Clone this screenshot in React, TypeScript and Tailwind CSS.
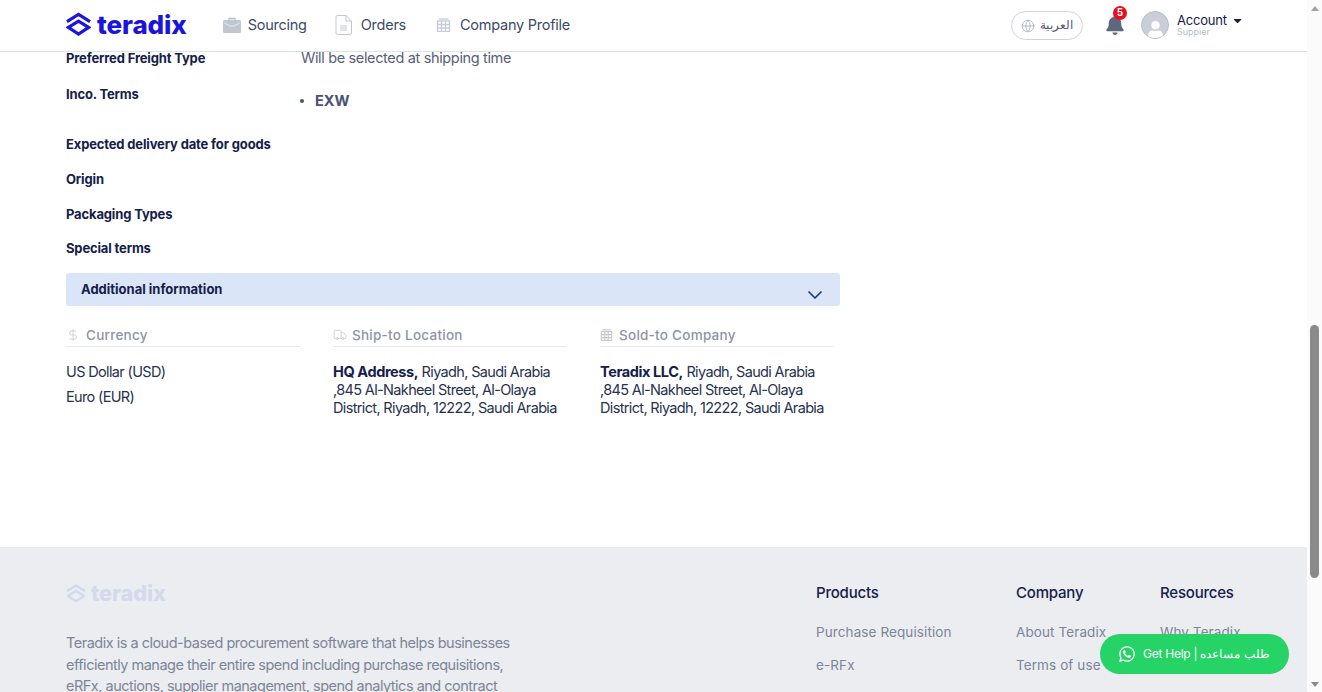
import { ChevronDown, DollarSign, Globe, Truck } from 'lucide-react';
import { FaBell, FaCaretDown, FaUser, FaWhatsapp } from 'react-icons/fa';

function Logo({ faded = false }: { faded?: boolean }) {
    const color = faded ? 'text-[#d5d9ee]' : 'text-[#1a14dc]';
    return (
        <div className={`flex items-center ${faded ? 'gap-[5px]' : 'gap-[6px]'} ${color}`}>
            <svg viewBox="0 0 26 26" className={faded ? 'h-[20px] w-[20px]' : 'h-[26px] w-[25px]'} fill="none" stroke="currentColor" strokeWidth="3.2">
                <path d="M1 9.5 13 2l12 7.5" />
                <path d="M2.5 15.5 13 9l10.5 6.5L13 22.5z" />
            </svg>
            <span className={`font-extrabold leading-none ${faded ? 'text-[21.5px]' : 'text-[26px] tracking-[-0.1px]'}`}>teradix</span>
        </div>
    );
}

function BriefcaseIcon() {
    return (
        <svg viewBox="0 0 18 16" className="h-[16px] w-[18px]" fill="none">
            <path d="M6 3V1.5h6V3" stroke="#b9c0cc" strokeWidth="1.3" />
            <rect y="3" width="18" height="13" rx="1.5" fill="#c1c7d2" />
            <path d="M0.5 5.5 7 9h4l6.5-3.5" stroke="#e4e7ec" strokeWidth="1" />
        </svg>
    );
}

function DocIcon() {
    return (
        <svg viewBox="0 0 17 20" className="h-[20px] w-[17px]" fill="none" stroke="#c1c7d2" strokeWidth="1">
            <path d="M1 2a1.5 1.5 0 0 1 1.5-1.5H11L16.500 6v12a1.500 1.500 0 0 1-1.500 1.500H2.500A1.500 1.500 0 0 1 1 18z" />
            <path d="M11 .5V6h5.500M5 11h7M5 13h7M5 15h7" />
        </svg>
    );
}

function GridBuildingIcon({ className }: { className: string }) {
    return (
        <svg viewBox="0 0 15 14" className={className} fill="none" stroke="currentColor" strokeWidth="1.3">
            <path d="M2.500 1h10" />
            <rect x="1.500" y="3" width="12" height="10.500" />
            <path d="M5.500 3v10.500M9.500 3v10.500M1.500 6.500h12M1.500 10h12" />
        </svg>
    );
}

function Header() {
    return (
        <header className="flex h-[52px] shrink-0 items-center justify-between border-b border-[#dfe1e6] bg-white pb-[2px] pl-[66px] pr-[65px]">
            <div className="flex items-center">
                <Logo />
                <nav className="ml-[36px] flex items-center text-[14.5px] tracking-[-0.25px] text-[#3d4a68]">
                    <div className="flex items-center gap-[7px]">
                        <BriefcaseIcon />
                        <span>Sourcing</span>
                    </div>
                    <div className="ml-[28px] flex items-center gap-[9px]">
                        <DocIcon />
                        <span>Orders</span>
                    </div>
                    <div className="ml-[30px] flex items-center gap-[9px]">
                        <GridBuildingIcon className="h-[14px] w-[15px] text-[#c6cbd5]" />
                        <span>Company Profile</span>
                    </div>
                </nav>
            </div>
            <div className="flex items-center">
                <div className="mt-[2px] flex h-[29px] w-[72px] items-center justify-center gap-[5px] rounded-full border border-[#cfd3da] text-[11.5px] text-[#4f5b76]">
                    <Globe className="h-[14px] w-[14px] text-[#a9b0bf]" strokeWidth={1.4} />
                    <span>العربية</span>
                </div>
                <div className="relative ml-[22px] h-[20px] w-[20px]">
                    <FaBell className="h-[20px] w-[20px] text-[#5c6880]" />
                    <span className="absolute left-[8px] top-[-9px] flex h-[14px] w-[14px] items-center justify-center rounded-full bg-[#e8101c] text-[10px] font-bold text-white">5</span>
                </div>
                <div className="ml-[16px] flex h-[28px] w-[28px] items-end justify-center overflow-hidden rounded-full border border-[#b9bfca] bg-[#c9ced8]">
                    <FaUser className="h-[17px] w-[17px] text-white" />
                </div>
                <div className="ml-[8px] w-[65px] leading-none">
                    <div className="flex items-center text-[13px] tracking-[-0.2px] text-[#14204a]">
                        Account
                        <FaCaretDown className="ml-[6px] h-[13px] w-[11px]" />
                    </div>
                    <div className="text-[9px] text-[#b6bcc9]">Suppier</div>
                </div>
            </div>
        </header>
    );
}

function DetailRow({ label, className }: { label: string; className: string }) {
    return <div className={`text-[13px] font-bold tracking-[-0.15px] text-[#14204a] ${className}`}>{label}</div>;
}

function Details() {
    return (
        <section className="h-[495px] shrink-0 px-[66px]">
            <div className="flex h-[12px] items-center">
                <DetailRow label="Preferred Freight Type" className="w-[235px] pt-[2px]" />
                <span className="text-[14.5px] tracking-[-0.35px] text-[#566178]">Will be selected at shipping time</span>
            </div>
            <div className="mt-[24px] flex h-[12px] items-center">
                <DetailRow label="Inco. Terms" className="w-[235px] pt-[2px]" />
            </div>
            <ul className="ml-[234px] mt-[-8px] flex h-[18px] items-center">
                <li className="flex items-center gap-[11px] text-[14.5px] font-bold text-[#475472]">
                    <span className="h-[4px] w-[4px] rounded-full bg-[#475472]" />
                    EXW
                </li>
            </ul>
            <DetailRow label="Expected delivery date for goods" className="mt-[26px] h-[16px] leading-[16px]" />
            <DetailRow label="Origin" className="mt-[19px] h-[16px] leading-[16px]" />
            <DetailRow label="Packaging Types" className="mt-[19px] h-[16px] leading-[16px]" />
            <DetailRow label="Special terms" className="mt-[18px] h-[16px] leading-[16px]" />

            <div className="mt-[17px] flex h-[33px] w-[774px] items-center justify-between rounded-[3px] bg-[#dbe5f8] pl-[15px] pr-[13px]">
                <span className="text-[13px] font-bold text-[#14204a]">Additional information</span>
                <ChevronDown className="mt-[11px] h-[24px] w-[24px] text-[#1f3a7a]" strokeWidth={1.7} />
            </div>

            <div className="mt-[20px] grid w-[767px] grid-cols-[234px_234px_233px] gap-x-[33px] text-[14.5px] leading-[18px] tracking-[-0.65px] text-[#27324f]">
                <div>
                    <ColumnTitle icon={<DollarSign className="h-[14px] w-[14px]" strokeWidth={1.3} />} label="Currency" gap="gap-[6px]" />
                    <div className="mt-[16px]">US Dollar (USD)</div>
                    <div className="mt-[7px]">Euro (EUR)</div>
                </div>
                <div>
                    <ColumnTitle icon={<Truck className="h-[14px] w-[14px]" strokeWidth={1.3} />} label="Ship-to Location" gap="gap-[5px]" />
                    <p className="mt-[16px] whitespace-nowrap">
                        <b className="font-bold tracking-[-0.4px] text-[#14204a]">HQ Address,</b> Riyadh, Saudi Arabia
                        <br />
                        ,845 Al-Nakheel Street, Al-Olaya
                        <br />
                        District, Riyadh, 12222, Saudi Arabia
                    </p>
                </div>
                <div>
                    <ColumnTitle icon={<GridBuildingIcon className="h-[12px] w-[13px]" />} label="Sold-to Company" gap="gap-[6px]" />
                    <p className="mt-[16px] whitespace-nowrap">
                        <b className="font-bold tracking-[-0.4px] text-[#14204a]">Teradix LLC,</b> Riyadh, Saudi Arabia
                        <br />
                        ,845 Al-Nakheel Street, Al-Olaya
                        <br />
                        District, Riyadh, 12222, Saudi Arabia
                    </p>
                </div>
            </div>
        </section>
    );
}

function ColumnTitle({ icon, label, gap }: { icon: React.ReactNode; label: string; gap: string }) {
    return (
        <div className={`flex h-[21px] items-center border-b border-[#e6e8ec] pb-[3px] text-[13.5px] font-medium tracking-[0.25px] text-[#8d95a6] ${gap}`}>
            <span className="text-[#c3c8d2]">{icon}</span>
            <span>{label}</span>
        </div>
    );
}

function FooterColumn({ title, links, className }: { title: string; links: string[]; className: string }) {
    return (
        <div className={className}>
            <h4 className="text-[15px] font-medium leading-[18px] tracking-[-0.2px] text-[#14204a]">{title}</h4>
            <div className="mt-[21px] flex flex-col gap-[15px] text-[13.5px] leading-[18px] tracking-[0.1px] text-[#7d8598]">
                {links.map((link) => (
                    <span key={link}>{link}</span>
                ))}
            </div>
        </div>
    );
}

function Footer() {
    return (
        <footer className="flex h-[300px] shrink-0 bg-[#ebedf1] pl-[66px] pt-[37px]">
            <div className="w-[750px]">
                <div className="flex h-[20px] items-center">
                    <Logo faded />
                </div>
                <p className="mt-[28px] w-[450px] text-[14.5px] leading-[21.5px] tracking-[-0.5px] text-[#7d8598]">
                    Teradix is a cloud-based procurement software that helps businesses efficiently manage their entire spend including purchase requisitions, eRFx, auctions, supplier management, spend analytics and contract
                </p>
            </div>
            <FooterColumn title="Products" links={['Purchase Requisition', 'e-RFx']} className="w-[200px]" />
            <FooterColumn title="Company" links={['About Teradix', 'Terms of use']} className="w-[144px]" />
            <FooterColumn title="Resources" links={['Why Teradix']} className="w-[120px]" />
        </footer>
    );
}

function Scrollbar() {
    return (
        <div className="flex h-full w-[15px] shrink-0 flex-col items-center bg-[#fbfbfb]">
            <div className="mt-[6px] h-0 w-0 border-x-[4px] border-b-[5px] border-x-transparent border-b-[#a3a3a3]" />
            <div className="mt-[314px] h-[253px] w-[9px] rounded-full bg-[#8a8a8a]" />
            <div className="mt-[104px] h-0 w-0 border-x-[4px] border-t-[5px] border-x-transparent border-t-[#8a8a8a]" />
        </div>
    );
}

export default function App() {
    return (
        <div className='relative flex h-[692px] w-[1322px] overflow-hidden bg-white font-["Inter","Liberation_Sans",sans-serif]'>
            <main className="flex h-full w-[1307px] flex-col overflow-hidden">
                <Header />
                <Details />
                <Footer />
            </main>
            <Scrollbar />
            <div className="absolute left-[1100px] top-[634px] flex h-[40px] w-[189px] items-center gap-[7px] rounded-full bg-[#25d366] pl-[18px] text-[12px] text-white">
                <FaWhatsapp className="h-[18px] w-[18px]" />
                <span className="tracking-[-0.25px]">Get Help | طلب مساعده</span>
            </div>
        </div>
    );
}
